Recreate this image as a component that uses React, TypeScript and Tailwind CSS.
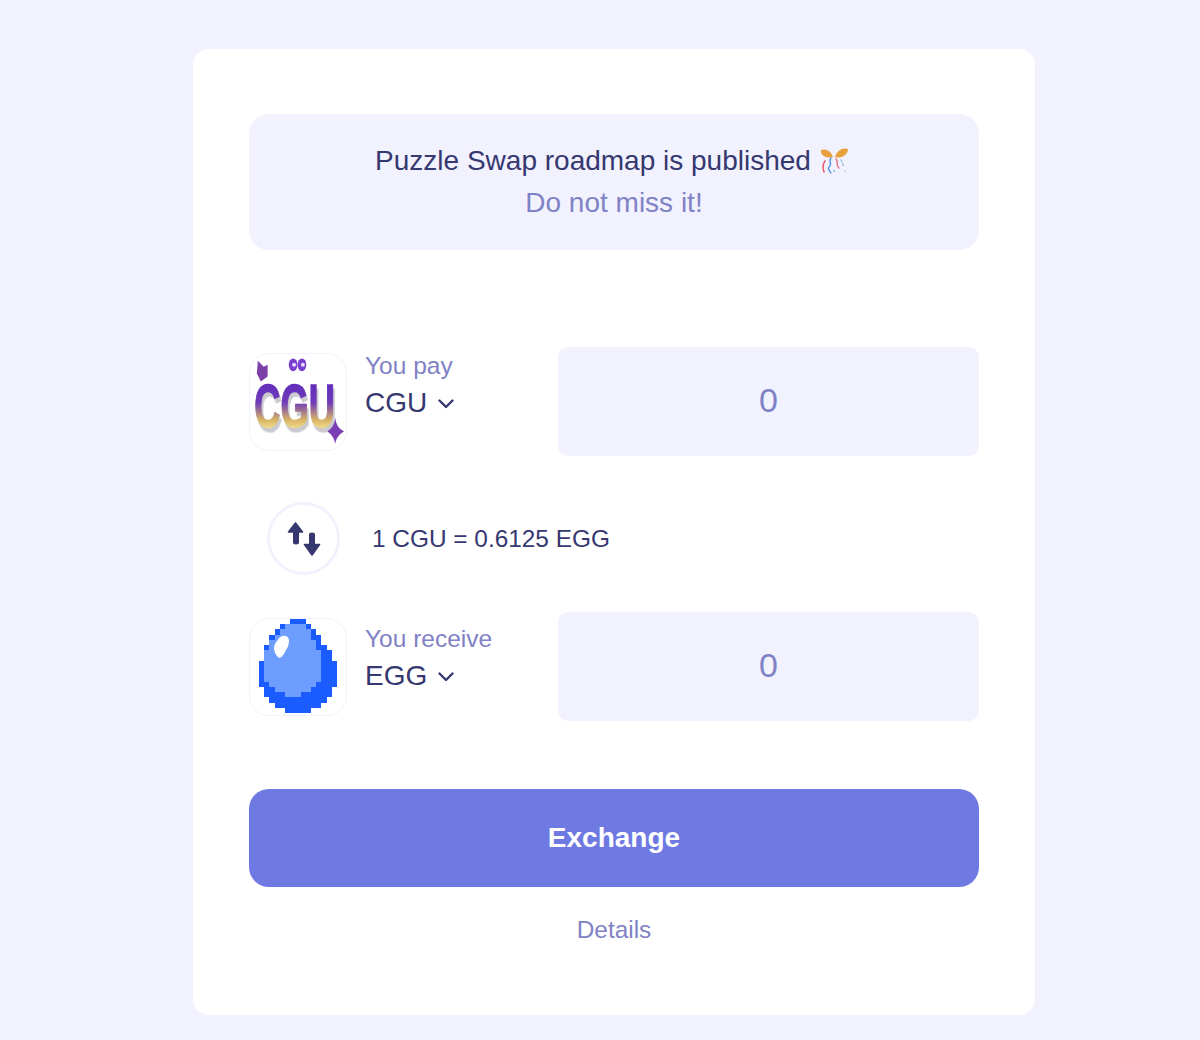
const outerRows: [number, number][] = [
  [6, 9], [4, 10], [3, 11], [2, 12], [2, 12], [1, 13], [1, 14], [1, 14], [0, 15],
  [0, 15], [0, 15], [0, 15], [0, 15], [1, 14], [1, 14], [2, 13], [3, 12], [5, 10],
];

const innerRows: [number, number, number][] = [
  [1, 5, 9], [2, 4, 10], [3, 3, 10], [4, 2, 11], [5, 2, 11], [6, 1, 12], [7, 1, 12], [8, 1, 12],
  [9, 1, 12], [10, 1, 12], [11, 1, 12], [12, 2, 11], [13, 3, 10], [14, 5, 8],
];

const CguLogo = () => (
  <svg viewBox="0 0 98 98" className="w-full h-full">
    <defs>
      <linearGradient id="cguFill" x1="0" y1="0" x2="0" y2="1">
        <stop offset="0" stopColor="#5a25c0" />
        <stop offset="0.45" stopColor="#6f3bb8" />
        <stop offset="0.7" stopColor="#d9b565" />
        <stop offset="0.85" stopColor="#f6e69a" />
        <stop offset="1" stopColor="#fbf6d8" />
      </linearGradient>
    </defs>
    <path d="M8 7 L14 13 L18 11 L18 23 L11 28 L7 20 Z" fill="#7d3fa8" />
    <ellipse cx="44" cy="11" rx="4.5" ry="6.5" fill="#7a3fd0" />
    <ellipse cx="53" cy="11" rx="4.5" ry="6.5" fill="#7a3fd0" />
    <circle cx="45" cy="11" r="2" fill="#ecdcff" />
    <circle cx="54" cy="11" r="2" fill="#ecdcff" />
    <text
      transform="translate(45.5 75) scale(0.88 1.5)"
      textAnchor="middle"
      fontFamily="Liberation Sans, sans-serif"
      fontWeight="700"
      fontSize="42"
      fill="url(#cguFill)"
      stroke="url(#cguFill)"
      strokeWidth="1"
      className="drop-shadow-[2px_3px_0_#c9c9cf]"
    >
      CGU
    </text>
    <path d="M87 65 C88 73 91 76 96 79 C91 82 88 85 87 92 C86 85 83 82 79 79 C83 76 86 73 87 65 Z" fill="#7a3fb5" />
  </svg>
);

const EggLogo = () => (
  <svg viewBox="0 0 78 94" className="w-[78px] h-[94px] absolute left-[9px] top-[0px]">
    {outerRows.map(([a, b], i) => (
      <rect key={i} x={a * 5.2} y={i * 5.22} width={(b - a) * 5.2} height={5.4} fill="#1a5cff" shapeRendering="crispEdges" />
    ))}
    {innerRows.map(([r, a, b]) => (
      <rect key={r} x={a * 5.2} y={r * 5.22} width={(b - a) * 5.2} height={5.4} fill="#6c9dff" shapeRendering="crispEdges" />
    ))}
    <path d="M23 17 Q29 16 30 21 Q30 27 27 31 Q24 38 20 39 Q16 36 15 30 Q15 25 18 22 Q20 18 23 17 Z" fill="#ffffff" />
  </svg>
);

const Chevron = () => (
  <svg viewBox="0 0 16 10" className="w-[16px] h-[10px] ml-[11px] mt-[2px]" fill="none" stroke="#363870" strokeWidth="2.4" strokeLinecap="round" strokeLinejoin="round">
    <path d="M1.5 1.5 L8 8 L14.5 1.5" />
  </svg>
);

const SwapIcon = () => (
  <svg viewBox="0 0 34 36" className="w-[34px] h-[36px]" fill="#363870" stroke="#363870" strokeWidth="1.6" strokeLinejoin="round">
    <path d="M8.5 2 L15.5 11 L11.2 11 L11.2 21.5 Q11.2 22.6 9 22.6 Q6.8 22.6 6.8 21.5 L6.8 11 L1.5 11 Z" />
    <path d="M25 34 L32.5 23.5 L27.2 23.5 L27.2 13.5 Q27.2 12.4 25 12.4 Q22.8 12.4 22.8 13.5 L22.8 23.5 L17.5 23.5 Z" />
  </svg>
);

const ConfettiIcon = () => (
  <svg viewBox="0 0 28 28" className="w-[28px] h-[28px] ml-[9px]" fill="none">
    <path d="M13 10 C11 4 6 1 1 3 C0 8 6 12 13 10 Z" fill="#e8a13c" />
    <path d="M15 10 C17 3 23 0 28 2 C28 8 21 12 15 10 Z" fill="#e8a13c" />
    <path d="M5 14 C2 18 3 22 4 25" stroke="#e8607a" strokeWidth="1.6" strokeLinecap="round" />
    <path d="M11 11 C8 14 13 17 9 20 C7 22 10 24 11 26" stroke="#4a8fe0" strokeWidth="1.3" strokeLinecap="round" />
    <path d="M16 12 C19 15 15 18 19 21" stroke="#e8607a" strokeWidth="1.3" strokeLinecap="round" />
    <path d="M21 13 L24 20" stroke="#9ac4ea" strokeWidth="1.4" strokeLinecap="round" strokeDasharray="2 2" />
    <circle cx="14" cy="24" r="1" fill="#7cc4e8" />
    <circle cx="25" cy="24" r="1" fill="#c4d4ea" />
  </svg>
);

const TokenRow = ({ label, symbol, logo, textClass }: { label: string; symbol: string; logo: React.ReactNode; textClass: string }) => (
  <div className="flex items-center h-[109px]">
    <div className="relative w-[98px] h-[98px] shrink-0 rounded-[20px] border border-[#f1f2fe] bg-white">
      {logo}
    </div>
    <div className={`ml-[18px] w-[193px] shrink-0 ${textClass}`}>
      <div className="text-[24.5px] leading-[32px] text-[#8082c5]">{label}</div>
      <div className="flex items-center mt-[1px] text-[28px] leading-[40px] text-[#363870]">
        {symbol}
        <Chevron />
      </div>
    </div>
    <div className="w-[421px] h-[109px] pb-[2px] rounded-[10px] bg-[#f1f2fe] flex items-center justify-center text-[34px] text-[#8082c5]">
      0
    </div>
  </div>
);

export default function App() {
  return (
    <div className="min-h-[1040px] bg-[#f1f2fe] pt-[49px] pl-[193px] font-['Liberation_Sans',sans-serif]">
      <div className="w-[842px] h-[966px] bg-white rounded-[16px] px-[56px] pt-[65px]">
        <div className="h-[136px] rounded-[20px] bg-[#f1f2fe] flex flex-col items-center justify-center text-[28px] leading-[42px]">
          <div className="flex items-center pr-[5px] text-[#363870]">
            Puzzle Swap roadmap is published
            <ConfettiIcon />
          </div>
          <div className="text-[#8082c5]">Do not miss it!</div>
        </div>

        <div className="mt-[97px]">
          <TokenRow label="You pay" symbol="CGU" logo={<CguLogo />} textClass="pb-[30px]" />
        </div>

        <div className="flex items-center mt-[46px] pl-[18px]">
          <div className="w-[73px] h-[73px] rounded-full border-[3px] border-[#f1f2fe] flex items-center justify-center">
            <SwapIcon />
          </div>
          <div className="ml-[32px] pt-[2px] text-[24.4px] text-[#363870]">1 CGU = 0.6125 EGG</div>
        </div>

        <div className="mt-[37px]">
          <TokenRow label="You receive" symbol="EGG" logo={<EggLogo />} textClass="pb-[15px]" />
        </div>

        <button className="block w-full h-[98px] mt-[68px] rounded-[20px] bg-[#6f79e2] text-white text-[28px] font-bold">
          Exchange
        </button>

        <div className="mt-[26px] text-center text-[24.4px] leading-[34px] text-[#8082c5]">Details</div>
      </div>
    </div>
  );
}
